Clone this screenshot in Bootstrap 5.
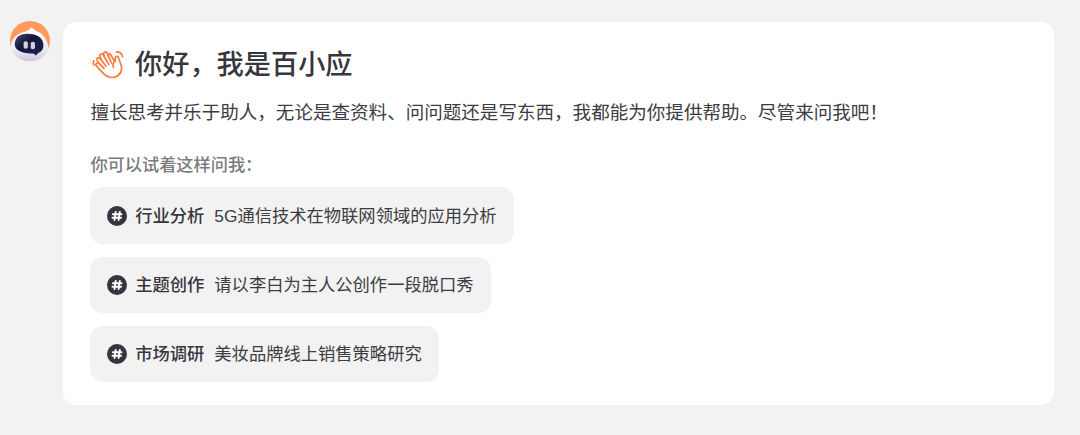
<!doctype html>
<html lang="zh-CN">
<head>
  <meta charset="utf-8" />
  <meta name="viewport" content="width=device-width, initial-scale=1" />
  <title>百小应</title>
  <link href="https://cdn.jsdelivr.net/npm/bootstrap@5.3.0/dist/css/bootstrap.min.css" rel="stylesheet" />
  <style>
    body {
      font-family: "Liberation Sans", "Noto Sans CJK SC", sans-serif;
      background-color: #f2f2f2;
      color: #3c3c43;
    }
    .chat-row {
      padding: 22px 26px 0 10px;
      gap: 13px;
    }
    .avatar {
      margin-top: -1px;
    }
    .welcome {
      height: 382.5px;
      padding: 23px 27px 0;
      border-radius: 13px;
    }
    .welcome-title {
      font-size: 27.2px;
      line-height: 40px;
      gap: 10px;
      color: #36363d;
    }
    .welcome-text {
      font-size: 18.56px;
      line-height: 28px;
      margin-top: 14px;
      padding-left: .4px;
    }
    .hint {
      font-size: 17.2px;
      line-height: 26px;
      margin: 25px 0 9.4px;
      padding-left: .4px;
      color: #7a7a82;
    }
    .topics {
      gap: 12.5px;
    }
    .topic {
      height: 56.7px;
      padding: 0 17.5px 0 17.2px;
      font-size: 17.3px;
      line-height: 26px;
      border: 0;
      border-radius: 13px;
      background-color: #f2f2f2;
      color: #3c3c43;
    }
    .topic-name {
      margin: 0 10px 0 8px;
      color: #36363d;
    }
  </style>
</head>
<body>

  <svg class="d-none">
    <symbol id="hash" viewBox="0 0 20 20">
      <circle cx="10" cy="10" r="10" fill="#353540" />
      <path d="M8.7 6L7.5 14M12.8 6L11.6 14M5.9 8.3H14.5M5.5 11.8H14.1" fill="none" stroke="#fff" stroke-width="1.9" stroke-linecap="round" />
    </symbol>
  </svg>

  <main class="chat-row d-flex align-items-start">
    <svg class="avatar flex-shrink-0" width="40" height="40" viewBox="0 0 40 40">
      <defs>
        <clipPath id="round"><circle cx="20" cy="20" r="20" /></clipPath>
        <linearGradient id="shell" x1="0" y1="0" x2="0" y2="1">
          <stop offset="0" stop-color="#fff" />
          <stop offset=".65" stop-color="#ececf6" />
          <stop offset="1" stop-color="#c9c9de" />
        </linearGradient>
        <linearGradient id="visor" x1="0" y1="0" x2="1" y2="1">
          <stop offset="0" stop-color="#4a4d72" />
          <stop offset=".4" stop-color="#14163b" />
          <stop offset="1" stop-color="#20224b" />
        </linearGradient>
      </defs>
      <g clip-path="url(#round)">
        <rect width="40" height="40" fill="#ff9a5c" />
        <path d="M21.7 6.2C19.5 9.3 16 10.2 11.5 11.8C5.5 14 2 18 .8 24L0 40H40L38.5 26.5C37 18.5 33.5 13.4 28 10.8C25 9.4 23.2 8.3 21.7 6.2Z" fill="url(#shell)" />
        <path d="M4.8 24C4.8 17 8.5 13.4 15 12.9C24 12.3 31.8 15 33.3 22.5C34 27.8 31.8 30.6 28.2 32L26 34.5L23.3 32.5C16 32.4 5.5 31.2 4.8 24Z" fill="url(#visor)" />
        <rect x="13.6" y="20.2" width="4.3" height="7.6" rx="2" fill="#d0d0de" />
        <rect x="20.7" y="20.7" width="4.3" height="7.6" rx="2" fill="#d0d0de" />
      </g>
    </svg>

    <section class="welcome bg-white flex-grow-1">
      <h1 class="welcome-title d-flex align-items-center fw-medium mb-0">
        <svg width="35" height="32" viewBox="0 .6 35 32" fill="none" stroke="#fb7b3e" stroke-width="1.7" stroke-linecap="round" stroke-linejoin="round">
          <path d="M14 20L9.3 15.2C7.3 13.3 4.8 15.6 6.6 17.8L13.5 25.3C15.5 27.3 17.5 28.5 20.5 29C25.5 29.6 31 26.6 31.6 21C32 16 29.2 13 28.7 9.8C28.3 7.4 25.7 7.3 25.3 9.5C25.2 11 25.5 12 24.7 13.3L20.9 6.6C19.8 4.8 17.6 5.5 18 7.6" />
          <path d="M16 17.8L10.2 10.2C8.6 8.2 6 9.9 7.3 12.2L9.3 15.2" />
          <path d="M18.7 16L13.3 6.6C12 4.4 9.2 5.8 10.2 8.1L11.2 11.3" />
          <path d="M21.5 14.6L17.3 4.9C16.2 2.4 13 3.4 13.8 6L14.4 8.3" />
          <path d="M24.7 13.3C22.6 15 22.6 17 23.5 19" />
          <path d="M26.5 3.5C29.6 3.5 31.9 5.4 32.6 8.3M3.9 12.4C3 13.6 3 15.2 3.9 16.6" />
        </svg>
        <span>你好，我是百小应</span>
      </h1>
      <p class="welcome-text mb-0">擅长思考并乐于助人，无论是查资料、问问题还是写东西，我都能为你提供帮助。尽管来问我吧！</p>
      <p class="hint fw-medium">你可以试着这样问我：</p>

      <div class="topics d-flex flex-column align-items-start">
        <button type="button" class="topic d-flex align-items-center">
          <svg width="20" height="20"><use href="#hash" /></svg>
          <span class="topic-name fw-medium">行业分析</span>
          <span>5G通信技术在物联网领域的应用分析</span>
        </button>
        <button type="button" class="topic d-flex align-items-center">
          <svg width="20" height="20"><use href="#hash" /></svg>
          <span class="topic-name fw-medium">主题创作</span>
          <span>请以李白为主人公创作一段脱口秀</span>
        </button>
        <button type="button" class="topic d-flex align-items-center">
          <svg width="20" height="20"><use href="#hash" /></svg>
          <span class="topic-name fw-medium">市场调研</span>
          <span>美妆品牌线上销售策略研究</span>
        </button>
      </div>
    </section>
  </main>

  <script src="https://cdn.jsdelivr.net/npm/bootstrap@5.3.0/dist/js/bootstrap.bundle.min.js"></script>
</body>
</html>
